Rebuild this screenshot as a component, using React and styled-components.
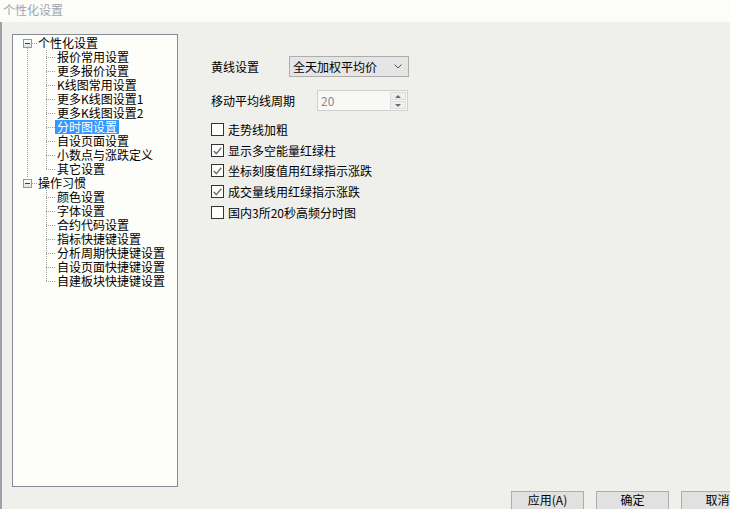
import React from "react";
import styled, { createGlobalStyle } from "styled-components";

const GlobalStyle = createGlobalStyle`
  html, body {
    margin: 0;
    padding: 0;
    background: #efefeb;
  }
  body {
    font-family: "Noto Sans CJK SC", "Liberation Sans", sans-serif;
    font-size: 12px;
    color: #000;
  }
  * { box-sizing: border-box; }
`;

const DOT_V = "repeating-linear-gradient(to bottom, #a0a0a0 0 1px, transparent 1px 2px)";
const DOT_H = "repeating-linear-gradient(to right, #a0a0a0 0 1px, transparent 1px 2px)";

const Window = styled.div`
  width: 730px;
  height: 509px;
  overflow: hidden;
  display: flex;
  flex-direction: column;
  background: #efefeb;
`;

const TitleBar = styled.div`
  height: 22px;
  flex: none;
  background: #fcfcf9;
  color: #a0a5ae;
  padding-left: 3px;
  line-height: 20px;
`;

const Body = styled.div`
  flex: 1;
  border-left: 2px solid #9da2aa;
  padding: 12px 0 0 10px;
  display: flex;
  flex-direction: column;
`;

const Main = styled.div`
  display: flex;
  align-items: flex-start;
`;

const TreePanel = styled.div`
  width: 166px;
  height: 453px;
  flex: none;
  border: 1px solid #868a94;
  background: #fdfdf9;
  padding-top: 1px;
`;

const RootRow = styled.div`
  height: 14px;
  display: flex;
  align-items: center;
  padding-left: 10px;
  white-space: nowrap;
  background-image: ${(p) => (p.$below ? DOT_V : "none")},
    ${(p) => (p.$above ? DOT_V : "none")};
  background-repeat: no-repeat;
  background-position: 14px 12px, 14px 0;
  background-size: 1px 2px, 1px 2px;
`;

const ExpandBox = styled.span`
  width: 9px;
  height: 9px;
  flex: none;
  border: 1px solid #8d9aae;
  background: linear-gradient(#ffffff, #dfe4ea);
  display: flex;
  align-items: center;
  justify-content: center;
  &::after {
    content: "";
    width: 5px;
    height: 1px;
    background: #23408a;
  }
`;

const Dots = styled.span`
  width: 5px;
  height: 1px;
  margin-right: 1px;
  flex: none;
  background: ${DOT_H};
`;

const Group = styled.div`
  background-image: ${(p) => (p.$trunk ? DOT_V : "none")}, ${DOT_V};
  background-repeat: no-repeat;
  background-position: 14px 0, 33px 0;
  background-size: 1px 100%, 1px calc(100% - 7px);
`;

const ChildRow = styled.div`
  height: 14px;
  display: flex;
  align-items: center;
  padding-left: 42px;
  white-space: nowrap;
  background: ${DOT_H} 33px 7px / 10px 1px no-repeat;
`;

const Label = styled.span`
  padding: 0 2px;
  line-height: 14px;
  height: 14px;
  background: ${(p) => (p.$selected ? "#3399ff" : "transparent")};
  color: ${(p) => (p.$selected ? "#fff" : "#000")};
`;

const RootLabel = styled.span`
  line-height: 14px;
`;

const Form = styled.div`
  margin-left: 33px;
  padding-top: 22px;
  display: flex;
  flex-direction: column;
`;

const FieldRow = styled.div`
  display: flex;
  align-items: center;
  height: 21px;
  margin-top: ${(p) => p.$top || 0}px;
`;

const FieldLabel = styled.span`
  width: ${(p) => p.$w}px;
  flex: none;
`;

const Select = styled.div`
  width: 120px;
  height: 21px;
  border: 1px solid #adadad;
  background: #e5e5e5;
  display: flex;
  align-items: center;
  justify-content: space-between;
  padding: 0 6px 0 3px;
`;

const Spin = styled.div`
  width: 91px;
  height: 21px;
  border: 1px solid #cfcfcf;
  background: #f8f8f6;
  color: #8a8a8a;
  display: flex;
  align-items: center;
  justify-content: space-between;
  padding: 1px 1px 1px 3px;
`;

const SpinButtons = styled.div`
  width: 16px;
  height: 100%;
  display: flex;
  flex-direction: column;
  gap: 1px;
`;

const SpinButton = styled.div`
  flex: 1;
  background: #efefef;
  border: 1px solid #dcdcdc;
  display: flex;
  align-items: center;
  justify-content: center;
  &::after {
    content: "";
    border-left: 3px solid transparent;
    border-right: 3px solid transparent;
    ${(p) =>
      p.$down
        ? "border-top: 3px solid #6a6a6a;"
        : "border-bottom: 3px solid #6a6a6a;"}
  }
`;

const CheckRow = styled.div`
  display: flex;
  align-items: center;
  height: 13px;
  gap: 4px;
  margin-top: ${(p) => p.$top}px;
  white-space: nowrap;
`;

const Box = styled.span`
  width: 13px;
  height: 13px;
  flex: none;
  border: 1px solid #333;
  background: #fff;
  display: flex;
  align-items: center;
  justify-content: center;
`;

const Footer = styled.div`
  display: flex;
  gap: 12px;
  margin-top: 4px;
  padding-left: 499px;
`;

const Button = styled.div`
  width: 73px;
  height: 24px;
  flex: none;
  background: #e1e1e1;
  border: 1px solid #adadad;
  text-align: center;
  line-height: 16px;
`;

const tree = [
  {
    label: "个性化设置",
    children: [
      "报价常用设置",
      "更多报价设置",
      "K线图常用设置",
      "更多K线图设置1",
      "更多K线图设置2",
      "分时图设置",
      "自设页面设置",
      "小数点与涨跌定义",
      "其它设置",
    ],
  },
  {
    label: "操作习惯",
    children: [
      "颜色设置",
      "字体设置",
      "合约代码设置",
      "指标快捷键设置",
      "分析周期快捷键设置",
      "自设页面快捷键设置",
      "自建板块快捷键设置",
    ],
  },
];

const checks = [
  { text: "走势线加粗", checked: false, top: 12 },
  { text: "显示多空能量红绿柱", checked: true, top: 8 },
  { text: "坐标刻度值用红绿指示涨跌", checked: true, top: 7 },
  { text: "成交量线用红绿指示涨跌", checked: true, top: 8 },
  { text: "国内3所20秒高频分时图", checked: false, top: 8 },
];

const Check = () => (
  <svg width="9" height="8" viewBox="0 0 9 8">
    <path d="M0.8 4 L3.3 6.6 L8.3 0.8" fill="none" stroke="#707070" strokeWidth="1.4" />
  </svg>
);

const Chevron = () => (
  <svg width="8" height="5" viewBox="0 0 8 5">
    <path d="M0.5 0.5 L4 4 L7.5 0.5" fill="none" stroke="#555" strokeWidth="1" />
  </svg>
);

export default function App() {
  return (
    <Window>
      <GlobalStyle />
      <TitleBar>个性化设置</TitleBar>
      <Body>
        <Main>
          <TreePanel>
            {tree.map((node, i) => {
              const last = i === tree.length - 1;
              return (
                <div key={node.label}>
                  <RootRow $below={!last} $above={i > 0}>
                    <ExpandBox />
                    <Dots />
                    <RootLabel>{node.label}</RootLabel>
                  </RootRow>
                  <Group $trunk={!last}>
                    {node.children.map((c) => (
                      <ChildRow key={c}>
                        <Label $selected={c === "分时图设置"}>{c}</Label>
                      </ChildRow>
                    ))}
                  </Group>
                </div>
              );
            })}
          </TreePanel>
          <Form>
            <FieldRow>
              <FieldLabel $w={78}>黄线设置</FieldLabel>
              <Select>
                <span>全天加权平均价</span>
                <Chevron />
              </Select>
            </FieldRow>
            <FieldRow $top={13}>
              <FieldLabel $w={106}>移动平均线周期</FieldLabel>
              <Spin>
                <span>20</span>
                <SpinButtons>
                  <SpinButton />
                  <SpinButton $down />
                </SpinButtons>
              </Spin>
            </FieldRow>
            {checks.map((c) => (
              <CheckRow key={c.text} $top={c.top}>
                <Box>{c.checked && <Check />}</Box>
                <span>{c.text}</span>
              </CheckRow>
            ))}
          </Form>
        </Main>
        <Footer>
          <Button>应用(A)</Button>
          <Button>确定</Button>
          <Button>取消</Button>
        </Footer>
      </Body>
    </Window>
  );
}
